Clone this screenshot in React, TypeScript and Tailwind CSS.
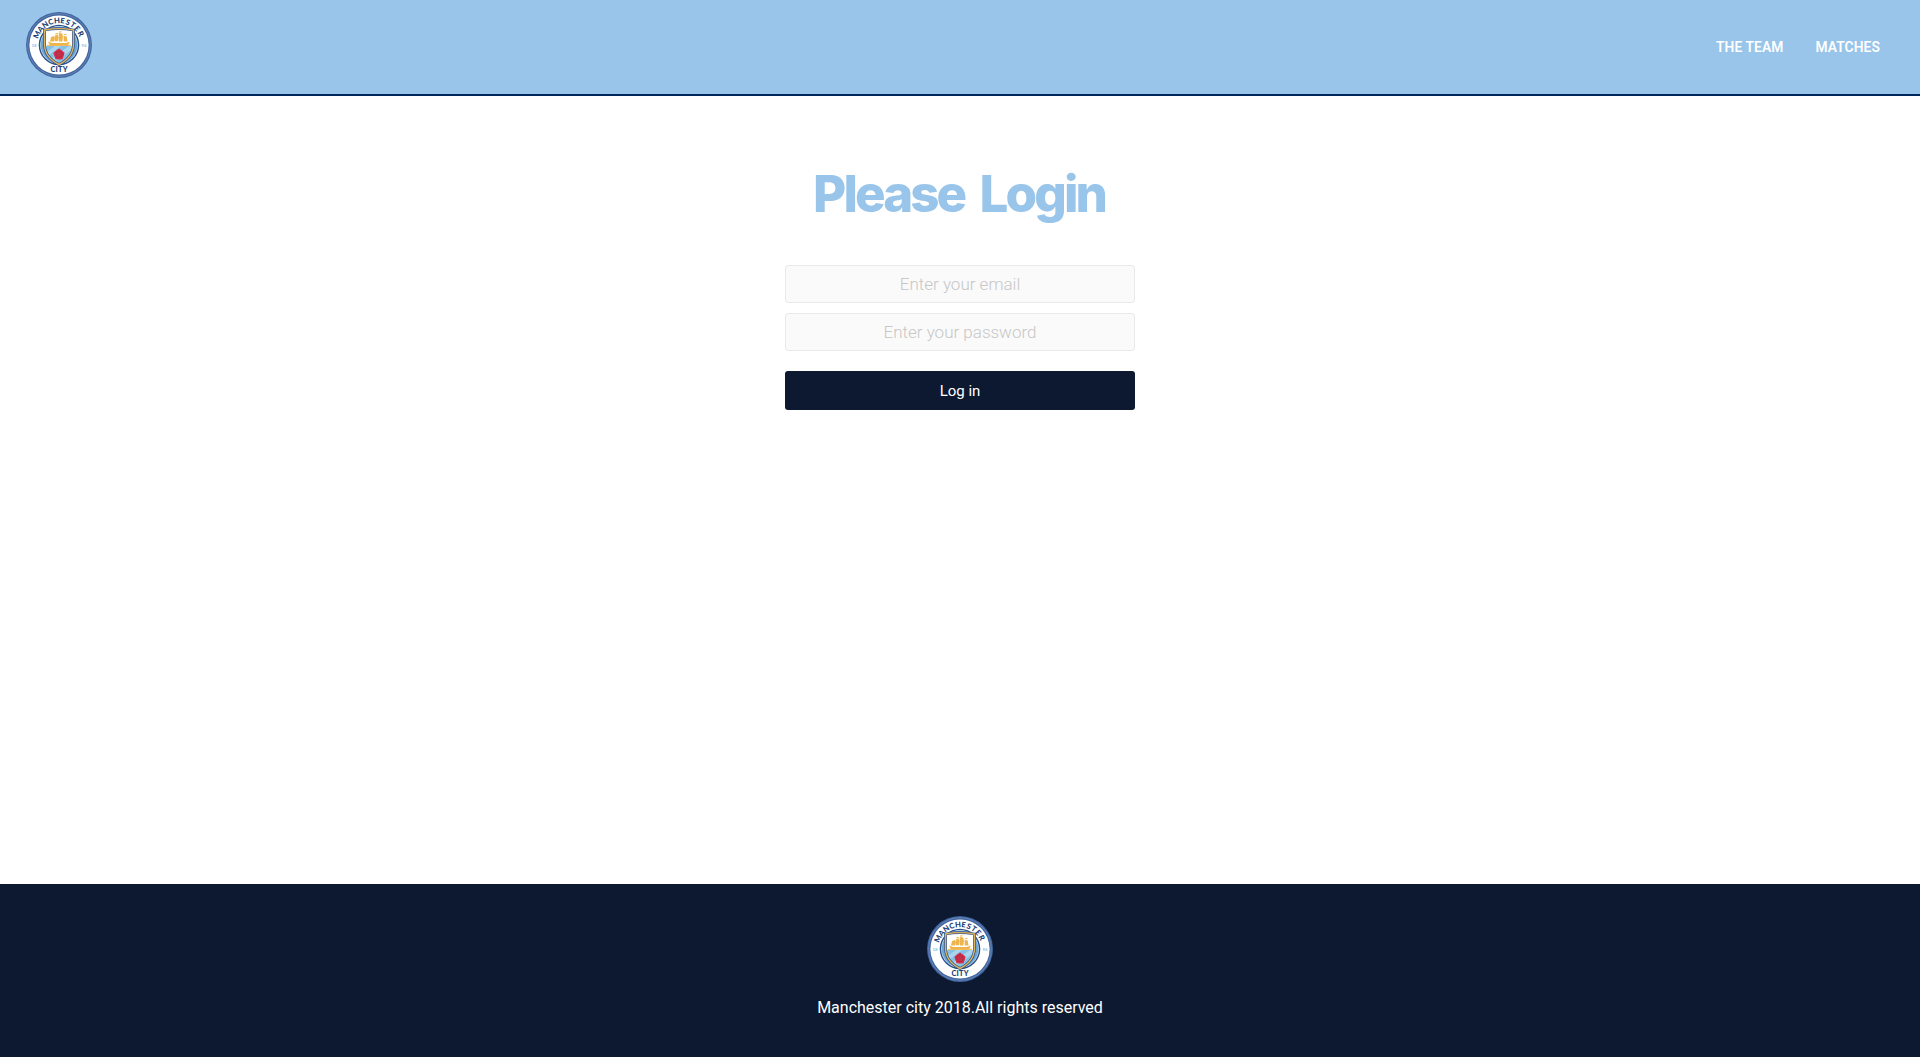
import React from 'react';

const point = (r: number, deg: number) => {
  const a = ((deg - 90) * Math.PI) / 180;
  return `${(r * Math.cos(a)).toFixed(2)},${(r * Math.sin(a)).toFixed(2)}`;
};

const rose = Array.from({ length: 10 }, (_, i) => point(i % 2 ? 4.9 : 5.9, i * 36)).join(' ');

const shield = 'M18.500 18Q33 15.200 47.500 18V32c0 10-5.500 16-14.500 20.500C24 48 18.500 42 18.500 32Z';

// Each letter of the club name with its angle around the crest, in degrees.
const ring: [string, number][] = [
  ['M', -65], ['A', -49], ['N', -34], ['C', -19.500], ['H', -5],
  ['E', 8.500], ['S', 21.500], ['T', 34.500], ['E', 48], ['R', 62.500],
];

function Crest({ id }: { id: string }) {
  return (
    <svg viewBox="0 0 66 66" className="block size-[66px]" aria-label="Manchester City">
      <defs>
        <clipPath id={`${id}-shield`}>
          <path d={shield} />
        </clipPath>
      </defs>
      <circle cx="33" cy="33" r="33" fill="#42659f" />
      <circle cx="33" cy="33" r="31.300" fill="none" stroke="#7398c8" strokeWidth="0.6" />
      <circle cx="33" cy="33" r="29.600" fill="#fff" />
      <circle cx="33" cy="33" r="20.300" fill="#294f8a" />
      <circle cx="33" cy="33" r="18.900" fill="#c9e2f3" />
      <circle cx="33" cy="33" r="18.300" fill="#6ea6d2" />
      <g clipPath={`url(#${id}-shield)`}>
        <path d="M18 14h30v20H18z" fill="#fff" />
        <path d="M18 34h30v19H18z" fill="#86c1e4" />
        <path d="M18 42 29 34h6L18 47zM22 49 43 34h5v2L26 52zM32 52l16-12v5L38 52z" fill="#aad7ef" />
      </g>
      <path d={shield} fill="none" stroke="#31528a" strokeWidth="2.800" />
      <path d={shield} fill="none" stroke="#ddb35c" strokeWidth="1.400" />
      <g fill="#efb44b">
        <path d="m22 29.500 4 1.500h14l4-1.500-2 4H24zM25 25l3-1 .8 2.500-.8 3h-4zM28.800 23.500l3-.800.800 3-.800 3.500h-3zM32.800 21l3.500.500.700 3.500-.700 4.500h-3.500zM37.700 23.800l3 .700.800 5h-3.800zM29.500 21l2.500.200v1l-2.500.300zM33 19.500h3l-1 .900h-2zM38.200 22h2.500l-.500.900h-2z" />
        <path d="M21 32.800h24v1H21z" />
      </g>
      <g transform="translate(33 42.500)">
        <polygon points={rose} fill="#d02e4b" />
        <circle r="3.100" fill="none" stroke="#a02845" strokeWidth="0.7" />
        <circle r="1.100" fill="#a73b46" />
      </g>
      <g fill="#203f78" fontFamily="Lato, sans-serif" fontWeight="900" textAnchor="middle">
        {ring.map(([letter, angle], i) => (
          <text key={i} x="33" y="11.200" fontSize="7.600" transform={`rotate(${angle} 33 33)`}>
            {letter}
          </text>
        ))}
        <text x="33.200" y="60.400" fontSize="7.400" letterSpacing="0.3">CITY</text>
        <g fill="#8fc7e8" fontSize="4.300">
          <text x="8" y="34.700">18</text>
          <text x="58" y="34.700">94</text>
        </g>
      </g>
    </svg>
  );
}

const fieldClass =
  'h-[38px] w-full rounded-[3px] border border-[#e9e9e9] bg-[#fafafa] text-center text-[17px] font-light text-black outline-none placeholder:text-[#c7c7c7]';

export default function App() {
  return (
    <div className="flex min-h-screen flex-col bg-white font-[Roboto,sans-serif]">
      <header className="flex h-24 items-center justify-between border-b-2 border-[#00285e] bg-[#98c5e9] pr-10 pl-[26px]">
        <a href="#" className="-mt-1">
          <Crest id="header" />
        </a>
        <nav className="flex gap-8 text-[13.8px] leading-5 font-semibold tracking-[0.1px] text-white">
          <a href="#">THE TEAM</a>
          <a href="#">MATCHES</a>
        </nav>
      </header>
      <main className="flex flex-1 justify-center pt-[62px]">
        <form className="flex w-[350px] flex-col" onSubmit={(e) => e.preventDefault()}>
          <h1 className="h-[107px] pr-0.5 text-center font-[Inter,sans-serif] text-[51px] leading-[72px] font-extrabold tracking-[-2.9px] whitespace-nowrap text-[#98c5e9] [word-spacing:7px]">
            Please Login
          </h1>
          <div className="flex flex-col gap-2.5">
            <input type="email" placeholder="Enter your email" className={fieldClass} />
            <input type="password" placeholder="Enter your password" className={fieldClass} />
          </div>
          <button className="mt-5 h-[39px] rounded-[3px] bg-[#0d1930] pt-0.5 text-[15px] text-white">Log in</button>
        </form>
      </main>
      <footer className="flex h-[173px] flex-col items-center bg-[#0d1930] pt-8 text-white">
        <a href="#">
          <Crest id="footer" />
        </a>
        <p className="mt-3.5 text-base">Manchester city 2018.All rights reserved</p>
      </footer>
    </div>
  );
}
